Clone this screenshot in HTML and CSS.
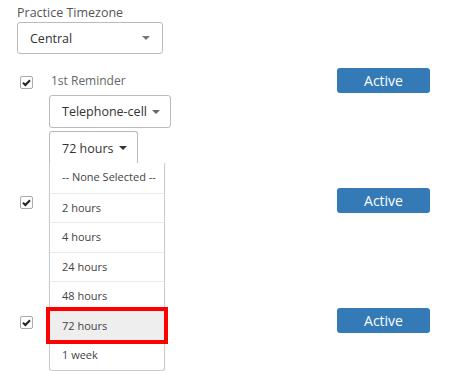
FILE: index.html
```html
<!DOCTYPE html>
<html lang="en">
<head>
    <meta charset="UTF-8">
    <title>Reminders</title>
    <link rel="stylesheet" href="styles.css">
</head>
<body>
    <div class="page">
        <div class="timezone">
            <label class="field-label">Practice Timezone</label>
            <div class="select select-tz">
                <span>Central</span>
                <span class="caret caret-light"></span>
            </div>
        </div>

        <div class="reminder">
            <span class="checkbox"><svg viewBox="0 0 13 13" width="13" height="13"><path d="M3 6.8 L5.4 9 L10 4.2" fill="none" stroke="#222" stroke-width="2"/></svg></span>
            <div class="reminder-body">
                <div class="reminder-title">1st Reminder</div>
                <div class="select select-method">
                    <span>Telephone-cell</span>
                    <span class="caret"></span>
                </div>
                <div class="dropdown">
                    <div class="select select-time open">
                        <span>72 hours</span>
                        <span class="caret caret-dark"></span>
                    </div>
                    <ul class="menu">
                        <li>-- None Selected --</li>
                        <li>2 hours</li>
                        <li>4 hours</li>
                        <li>24 hours</li>
                        <li>48 hours</li>
                        <li class="selected">72 hours</li>
                        <li>1 week</li>
                    </ul>
                </div>
            </div>
            <button class="btn-active">Active</button>
        </div>

        <div class="reminder">
            <span class="checkbox"><svg viewBox="0 0 13 13" width="13" height="13"><path d="M3 6.8 L5.4 9 L10 4.2" fill="none" stroke="#222" stroke-width="2"/></svg></span>
            <div class="reminder-body"></div>
            <button class="btn-active">Active</button>
        </div>

        <div class="reminder">
            <span class="checkbox"><svg viewBox="0 0 13 13" width="13" height="13"><path d="M3 6.8 L5.4 9 L10 4.2" fill="none" stroke="#222" stroke-width="2"/></svg></span>
            <div class="reminder-body"></div>
            <button class="btn-active">Active</button>
        </div>
    </div>
</body>
</html>
```

FILE: styles.css
```css
* {
    margin: 0;
    padding: 0;
    box-sizing: border-box;
}

html, body {
    height: 371px;
    overflow: hidden;
}

body {
    font-family: 'Open Sans', 'Liberation Sans', sans-serif;
    font-size: 13px;
    color: #333;
    background: #fff;
}

.page {
    padding: 4px 34px 0 17px;
}

.field-label {
    display: block;
    color: #555;
    font-size: 12.5px;
    line-height: 18px;
}

.select {
    display: flex;
    align-items: center;
    justify-content: space-between;
    border: 1px solid #bbb;
    border-radius: 3px;
    background: #fff;
    color: #333;
    font-size: 12.5px;
    white-space: nowrap;
}

.select-tz {
    width: 146px;
    height: 32px;
    padding: 0 12px;
}

.caret {
    flex: none;
    width: 0;
    height: 0;
    border-left: 4px solid transparent;
    border-right: 4px solid transparent;
    border-top: 4px solid #666;
}

.caret-light {
    border-top-color: #777;
}

.caret-dark {
    border-top-color: #333;
}

.reminder {
    display: flex;
    align-items: flex-start;
    height: 120px;
    padding-left: 3px;
}

.reminder:last-child {
    height: auto;
}

.timezone + .reminder {
    margin-top: 14px;
}

.checkbox {
    width: 13px;
    height: 13px;
    margin-top: 8px;
    border: 1px solid #aaa;
    border-radius: 2px;
    display: flex;
    background: #fff;
}

.checkbox svg {
    margin: -1px;
}

.reminder-body {
    margin-left: 16px;
    position: relative;
}

.reminder-title {
    color: #666;
    font-size: 12px;
    line-height: 18px;
    margin-top: 4px;
    padding-left: 2px;
}

.select-method {
    width: 122px;
    height: 33px;
    margin-top: 5px;
    padding: 0 10px 0 12px;
}

.dropdown {
    position: relative;
    margin-top: 3px;
}

.select-time {
    width: 89px;
    height: 33px;
    padding: 0 11px 0 12px;
    border-bottom-left-radius: 0;
    border-bottom-right-radius: 0;
    border-bottom: none;
    justify-content: flex-start;
    gap: 6px;
}

.menu {
    position: absolute;
    top: 32px;
    left: 0;
    width: 116px;
    list-style: none;
    background: #fff;
    border: 1px solid #ccc;
    border-top: none;
    border-radius: 0 0 3px 3px;
    box-shadow: 0 1px 2px rgba(0, 0, 0, 0.08);
    z-index: 2;
}

.menu li {
    height: 29.5px;
    line-height: 27px;
    padding-left: 12px;
    font-size: 11px;
    color: #444;
    white-space: nowrap;
    border-top: 1px solid #eaeaea;
}

.menu li:first-child {
    border-top: none;
}

.menu li.selected {
    background: #eee;
    outline: 4px solid #f00;
    position: relative;
}

.btn-active {
    margin-left: auto;
    width: 93px;
    height: 25px;
    border: none;
    border-radius: 3px;
    background: #337ab7;
    color: #fff;
    font-family: 'Open Sans', 'Liberation Sans', sans-serif;
    font-size: 14px;
    line-height: 25px;
}
```
